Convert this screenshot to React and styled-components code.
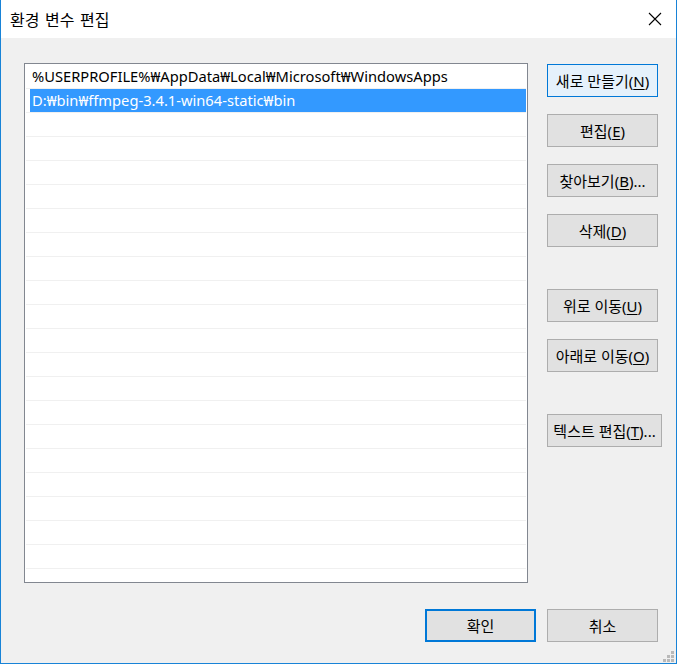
import React from "react";
import styled, { createGlobalStyle } from "styled-components";

const GlobalStyle = createGlobalStyle`
  html, body {
    margin: 0;
    padding: 0;
    background: #f0f0f0;
  }
  body {
    font-family: "Noto Sans", "Noto Sans CJK KR", sans-serif;
    color: #000;
  }
`;

const Window = styled.div`
  position: relative;
  width: 677px;
  height: 664px;
  box-sizing: border-box;
  border: 1px solid #1883d7;
  border-top: none;
  background: #f0f0f0;
  display: flex;
  flex-direction: column;
`;

const TitleBar = styled.div`
  height: 38px;
  flex-shrink: 0;
  background: #fff;
  display: flex;
  align-items: center;
  justify-content: space-between;
  padding-left: 9px;
`;

const Title = styled.div`
  font-family: "Noto Sans CJK KR", sans-serif;
  font-size: 16px;
  word-spacing: 2px;
  line-height: 1;
`;

const CloseButton = styled.div`
  width: 43px;
  height: 38px;
  display: flex;
  align-items: center;
  justify-content: center;
`;

const Body = styled.div`
  flex: 1;
  display: flex;
  flex-direction: column;
  padding: 25px 18px 0 23px;
`;

const Main = styled.div`
  display: flex;
  gap: 19px;
`;

const List = styled.div`
  width: 504px;
  height: 520px;
  flex-shrink: 0;
  box-sizing: border-box;
  border: 1px solid #828790;
  background: #fff;
  padding: 1px;
  overflow: hidden;
`;

const Row = styled.div`
  height: 23px;
  border-bottom: 1px solid #f0f0f0;
  display: flex;
`;

const Cell = styled.div`
  flex: 1;
  margin-left: 4px;
  padding-left: 2px;
  font-size: 14.7px;
  line-height: 23px;
  white-space: nowrap;
  background: ${(p) => (p.$selected ? "#3399ff" : "transparent")};
  color: ${(p) => (p.$selected ? "#fff" : "#000")};
`;

const ButtonColumn = styled.div`
  flex: 1;
  display: flex;
  flex-direction: column;
  align-items: flex-start;
  gap: 17px;
  padding-top: 1px;
`;

const Button = styled.div`
  width: ${(p) => p.$width || 111}px;
  height: 33px;
  box-sizing: border-box;
  margin-top: ${(p) => (p.$spaced ? 25 : 0)}px;
  border: ${(p) => (p.$default ? 2 : 1)}px solid
    ${(p) => (p.$focused || p.$default ? "#0078d7" : "#adadad")};
  background: ${(p) => (p.$focused ? "#e5f1fb" : "#e1e1e1")};
  display: flex;
  align-items: center;
  justify-content: center;
  font-size: 15px;
  white-space: nowrap;
`;

const Key = styled.span`
  text-decoration: underline;
  text-underline-offset: 2px;
`;

const Footer = styled.div`
  display: flex;
  justify-content: flex-end;
  gap: 11px;
  margin-top: 26px;
`;

const Grip = styled.svg`
  position: absolute;
  right: 2px;
  bottom: 1px;
`;

const items = [
  "%USERPROFILE%₩AppData₩Local₩Microsoft₩WindowsApps",
  "D:₩bin₩ffmpeg-3.4.1-win64-static₩bin",
];

const Label = ({ text, k, tail = "" }) => (
  <>
    {text}(<Key>{k}</Key>){tail}
  </>
);

export default function App() {
  const rows = Array.from({ length: 22 }, (_, i) => items[i] || "");

  return (
    <>
      <GlobalStyle />
      <Window>
        <TitleBar>
          <Title>환경 변수 편집</Title>
          <CloseButton>
            <svg width="14" height="14" viewBox="0 0 14 14">
              <path d="M1 1 L13 13 M13 1 L1 13" stroke="#000" strokeWidth="1.1" />
            </svg>
          </CloseButton>
        </TitleBar>
        <Body>
          <Main>
            <List>
              {rows.map((text, i) => (
                <Row key={i}>
                  <Cell $selected={i === 1}>{text}</Cell>
                </Row>
              ))}
            </List>
            <ButtonColumn>
              <Button $focused>
                <Label text="새로 만들기" k="N" />
              </Button>
              <Button>
                <Label text="편집" k="E" />
              </Button>
              <Button>
                <Label text="찾아보기" k="B" tail="..." />
              </Button>
              <Button>
                <Label text="삭제" k="D" />
              </Button>
              <Button $spaced>
                <Label text="위로 이동" k="U" />
              </Button>
              <Button>
                <Label text="아래로 이동" k="O" />
              </Button>
              <Button $spaced $width={115}>
                <Label text="텍스트 편집" k="T" tail="..." />
              </Button>
            </ButtonColumn>
          </Main>
          <Footer>
            <Button $default>확인</Button>
            <Button>취소</Button>
          </Footer>
        </Body>
        <Grip width="11" height="11" viewBox="0 0 11 11">
          <g fill="#b9b9b9">
            <rect x="8" y="0" width="3" height="3" />
            <rect x="4" y="4" width="3" height="3" />
            <rect x="8" y="4" width="3" height="3" />
            <rect x="0" y="8" width="3" height="3" />
            <rect x="4" y="8" width="3" height="3" />
            <rect x="8" y="8" width="3" height="3" />
          </g>
        </Grip>
      </Window>
    </>
  );
}
